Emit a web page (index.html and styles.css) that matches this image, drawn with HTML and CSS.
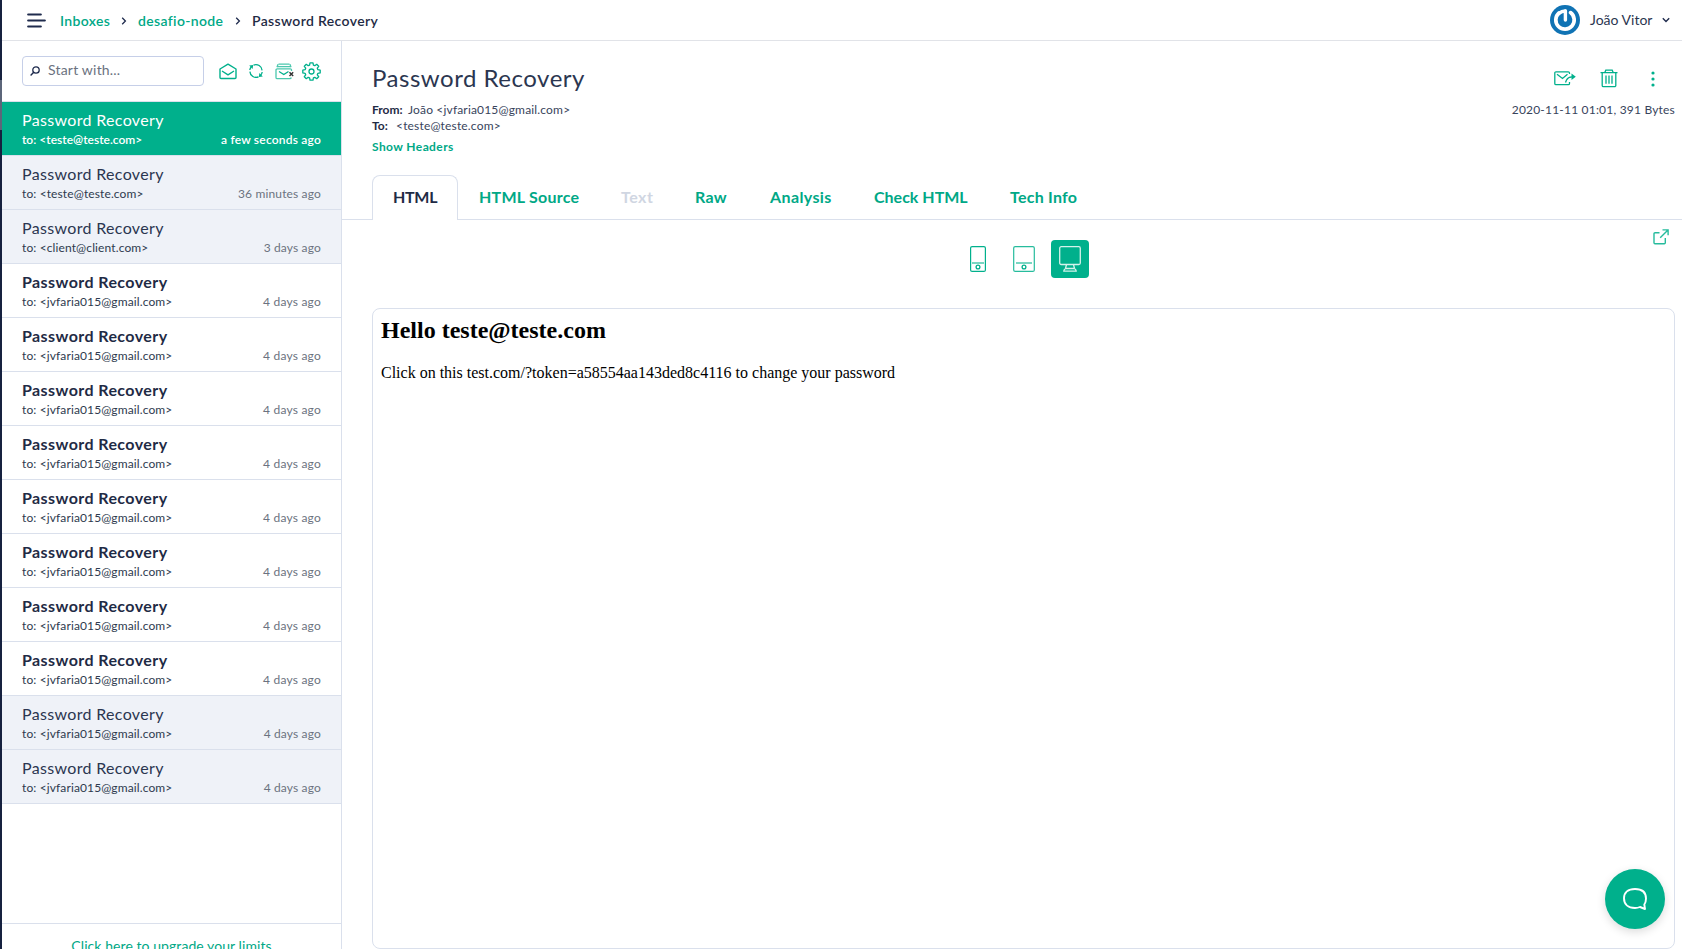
FILE: index.html
```html
<!DOCTYPE html>
<html lang="en">
<head>
<meta charset="utf-8">
<title>Password Recovery</title>
<link rel="stylesheet" href="styles.css">
</head>
<body>
<div class="app">
  <div class="rail"><div class="rail-thumb"></div></div>
  <div class="shell">
    <header class="topbar">
      <svg class="burger" width="19" height="15" viewBox="0 0 19 15"><path d="M1.2 1.5h12.6M1.2 7.5h16.6M1.2 13.5h12.6" stroke="#1f2b4d" stroke-width="2.2" stroke-linecap="round"/></svg>
      <nav class="crumbs">
        <a class="crumb crumb-inboxes">Inboxes</a>
        <svg class="chev" width="6" height="8" viewBox="0 0 6 8"><path d="M1.2 .8L4.4 4 1.2 7.2" fill="none" stroke="#1f2b4d" stroke-width="1.3"/></svg>
        <a class="crumb crumb-project">desafio-node</a>
        <svg class="chev" width="6" height="8" viewBox="0 0 6 8"><path d="M1.2 .8L4.4 4 1.2 7.2" fill="none" stroke="#1f2b4d" stroke-width="1.3"/></svg>
        <span class="crumb crumb-current">Password Recovery</span>
      </nav>
      <div class="user">
        <svg width="30" height="30" viewBox="0 0 30 30"><circle cx="15" cy="15" r="15" fill="#1073b4"/><path d="M9 8A9.200 9.200 0 1 0 20.500 7.600" fill="none" stroke="#fff" stroke-width="3.700" stroke-linecap="round"/><path d="M9.200 8.200Q11.500 6 15.300 6" fill="none" stroke="#fff" stroke-width="3.400" stroke-linecap="round"/><path d="M15.400 6v9" stroke="#fff" stroke-width="3.400" stroke-linecap="round"/></svg>
        <span class="user-name">João Vitor</span>
        <svg width="8" height="6" viewBox="0 0 8 6"><path d="M.8 1.200L4 4.400l3.200-3.200" fill="none" stroke="#1f2b4d" stroke-width="1.400"/></svg>
      </div>
    </header>
    <div class="body">
      <aside class="sidebar">
        <div class="tools">
          <div class="search">
            <svg width="10" height="10" viewBox="0 0 10 10"><circle cx="6" cy="4" r="3.200" fill="none" stroke="#1f2b4d" stroke-width="1.300"/><path d="M3.700 6.300L.6 9.400" stroke="#1f2b4d" stroke-width="1.400"/></svg>
            <span class="placeholder">Start with...</span>
          </div>
          <div class="tool-icons">
            <svg width="18" height="17" viewBox="0 0 18 17"><path d="M1 6L9 1.200 17 6V14.500a1 1 0 0 1-1 1H2a1 1 0 0 1-1-1zM3 8l6 3.800L15 8" fill="none" stroke="#00b08c" stroke-width="1.400" stroke-linejoin="round"/></svg>
            <svg width="16" height="16" viewBox="0 0 16 16"><path d="M5.500 2.100A6.200 6.200 0 0 1 14.100 7.400M10.500 13.900A6.200 6.200 0 0 1 1.900 8.600M1.800 7A6.200 6.200 0 0 1 3.200 4M14.200 9A6.200 6.200 0 0 1 12.800 12" fill="none" stroke="#00b08c" stroke-width="1.300"/><path d="M1.200 2.400l4-.4-.6 4zM14.800 13.600l-4 .4.600-4z" fill="#00b08c"/></svg>
            <svg width="20" height="17" viewBox="0 0 20 17"><g fill="none" stroke="#4cc8ae" stroke-width="1.300"><path d="M3.500 1.200h11M2.500 3.700h13M16.500 8V7a1.200 1.200 0 0 0-1.200-1.200H2.200A1.200 1.200 0 0 0 1 7v7.500a1.200 1.200 0 0 0 1.200 1.200h12.600a1.600 1.600 0 0 0 1.500-1.200M2 4.200l1-3M16 4.200l-1-3"/><path d="M4 8.500l4.800 3L13.500 8.500" stroke="#00b08c"/></g><path d="M14.500 9.200l3.700 3.700M18.200 9.200l-3.700 3.700" stroke="#333" stroke-width="1.400"/></svg>
            <svg class="gear" width="19" height="19" viewBox="0 0 19 19"><g fill="none" stroke="#00b08c" stroke-width="1.300" stroke-linejoin="round"><path d="M8 .8h3l.4 2.300 1.400.6 1.900-1.400 2 2-1.400 1.900.6 1.500 2.300.4v2.800l-2.300.4-.6 1.500 1.400 1.900-2 2-1.900-1.400-1.400.6-.4 2.300H8l-.4-2.300-1.400-.6-1.900 1.400-2-2 1.400-1.900-.6-1.500-2.300-.4V8.100l2.300-.4.600-1.500-1.400-1.900 2-2 1.900 1.400 1.400-.6z"/><circle cx="9.500" cy="9.500" r="2.500"/></g></svg>
          </div>
        </div>
        <ul class="mails">
          <li class="mail active"><div class="subject">Password Recovery</div><div class="meta"><span class="to">to: &lt;teste@teste.com&gt;</span><span class="time">a few seconds ago</span></div></li>
          <li class="mail read"><div class="subject">Password Recovery</div><div class="meta"><span class="to">to: &lt;teste@teste.com&gt;</span><span class="time">36 minutes ago</span></div></li>
          <li class="mail read"><div class="subject">Password Recovery</div><div class="meta"><span class="to">to: &lt;client@client.com&gt;</span><span class="time">3 days ago</span></div></li>
          <li class="mail"><div class="subject">Password Recovery</div><div class="meta"><span class="to">to: &lt;jvfaria015@gmail.com&gt;</span><span class="time">4 days ago</span></div></li>
          <li class="mail"><div class="subject">Password Recovery</div><div class="meta"><span class="to">to: &lt;jvfaria015@gmail.com&gt;</span><span class="time">4 days ago</span></div></li>
          <li class="mail"><div class="subject">Password Recovery</div><div class="meta"><span class="to">to: &lt;jvfaria015@gmail.com&gt;</span><span class="time">4 days ago</span></div></li>
          <li class="mail"><div class="subject">Password Recovery</div><div class="meta"><span class="to">to: &lt;jvfaria015@gmail.com&gt;</span><span class="time">4 days ago</span></div></li>
          <li class="mail"><div class="subject">Password Recovery</div><div class="meta"><span class="to">to: &lt;jvfaria015@gmail.com&gt;</span><span class="time">4 days ago</span></div></li>
          <li class="mail"><div class="subject">Password Recovery</div><div class="meta"><span class="to">to: &lt;jvfaria015@gmail.com&gt;</span><span class="time">4 days ago</span></div></li>
          <li class="mail"><div class="subject">Password Recovery</div><div class="meta"><span class="to">to: &lt;jvfaria015@gmail.com&gt;</span><span class="time">4 days ago</span></div></li>
          <li class="mail"><div class="subject">Password Recovery</div><div class="meta"><span class="to">to: &lt;jvfaria015@gmail.com&gt;</span><span class="time">4 days ago</span></div></li>
          <li class="mail read"><div class="subject">Password Recovery</div><div class="meta"><span class="to">to: &lt;jvfaria015@gmail.com&gt;</span><span class="time">4 days ago</span></div></li>
          <li class="mail read"><div class="subject">Password Recovery</div><div class="meta"><span class="to">to: &lt;jvfaria015@gmail.com&gt;</span><span class="time">4 days ago</span></div></li>
        </ul>
        <div class="upgrade"><a>Click here to upgrade your limits</a></div>
      </aside>
      <main class="message">
        <div class="head">
          <div class="head-left">
            <h1 class="title">Password Recovery</h1>
            <div class="addr"><b class="from-label">From:</b><span class="from-value">João &lt;jvfaria015@gmail.com&gt;</span></div>
            <div class="addr"><b class="to-label">To:</b><span class="to-value">&lt;teste@teste.com&gt;</span></div>
            <a class="show-headers">Show Headers</a>
          </div>
          <div class="head-right">
            <div class="actions">
              <svg width="22" height="15" viewBox="0 0 22 15"><g fill="none" stroke="#00b08c" stroke-width="1.300"><path d="M15.500 3V2A1.200 1.200 0 0 0 14.300.8H2A1.200 1.200 0 0 0 .8 2v10.500a1.200 1.200 0 0 0 1.200 1.200h12.300a1.200 1.200 0 0 0 1.200-1.200V11M3 3.200l5.500 4.300L13.500 3.200"/><path d="M11.500 11.500l1-2.500q1.500-3 5.500-3.200"/></g><path d="M17.500 2.600l4.300 3.200-4.300 3.200z" fill="#00b08c"/></svg>
              <svg class="trash" width="18" height="19" viewBox="0 0 18 19"><path d="M.5 3.700h17M4.800 3.500l1-2.300h6.400l1 2.300M2.200 4v12.500a1.200 1.200 0 0 0 1.200 1.200h11.200a1.200 1.200 0 0 0 1.200-1.200V4M6 6.500v8.200M9 6.500v8.200M12 6.500v8.200" fill="none" stroke="#00b08c" stroke-width="1.300"/></svg>
              <svg width="4" height="16" viewBox="0 0 4 16" fill="#00b08c"><circle cx="2" cy="2" r="1.600"/><circle cx="2" cy="8" r="1.600"/><circle cx="2" cy="14" r="1.600"/></svg>
            </div>
            <div class="stamp">2020-11-11 01:01, 391 Bytes</div>
          </div>
        </div>
        <div class="tabs">
          <div class="tab current">HTML</div>
          <div class="tab t-source">HTML Source</div>
          <div class="tab t-text">Text</div>
          <div class="tab t-raw">Raw</div>
          <div class="tab t-analysis">Analysis</div>
          <div class="tab t-check">Check HTML</div>
          <div class="tab t-tech">Tech Info</div>
        </div>
        <div class="devices">
          <div class="device"><svg width="16" height="26" viewBox="0 0 16 26"><g fill="none" stroke="#00b08c"><rect x=".6" y=".6" width="14.800" height="24.800" rx="1.500" stroke-width="1.200"/><path d="M2 17h12" stroke="#4cc8ae" stroke-width="1.500"/><circle cx="8" cy="21" r="1.900" stroke-width="1.300"/></g></svg></div>
          <div class="device"><svg width="22" height="26" viewBox="0 0 22 26"><g fill="none" stroke="#00b08c"><rect x=".7" y=".6" width="20.600" height="24.800" rx="1.500" stroke="#26bc9d" stroke-width="1.200"/><path d="M3 17h16" stroke="#4cc8ae" stroke-width="1.500"/><circle cx="11" cy="21" r="1.900" stroke-width="1.300"/></g></svg></div>
          <div class="device selected"><svg width="22" height="26" viewBox="0 0 22 26"><g fill="none" stroke="#d4f2eb" stroke-width="1.300"><rect x=".7" y=".7" width="20.600" height="17.800" rx="1.500"/><path d="M7.500 18.500l-1 4M14.500 18.500l1 4M6.500 22.500h9q1.700 1 1.700 2.600H4.800q0-1.600 1.700-2.600z"/></g></svg></div>
          <svg class="external" width="16" height="16" viewBox="0 0 16 16"><g fill="none" stroke="#26bc9d" stroke-width="1.400"><path d="M6.500 3.700H2A1 1 0 0 0 1 4.700v9a1 1 0 0 0 1 1h9.300a1 1 0 0 0 1-1V9"/><path d="M7.200 8.700L15 1M9.500.9H15.100V6.300"/></g></svg>
        </div>
        <article class="preview">
          <h2 class="hello">Hello teste@teste.com</h2>
          <p class="copy">Click on this test.com/?token=a58554aa143ded8c4116 to change your password</p>
        </article>
      </main>
    </div>
  </div>
  <div class="chat"><svg width="26" height="24" viewBox="0 0 26 24"><path d="M22.300 17.500C23.600 15.700 24 14 24 11.500 24 5.500 20 2 13 2S2 5.500 2 11.300 6 21 13 21q2.700 0 5-1l5 2z" fill="none" stroke="#fff" stroke-width="1.900" stroke-linejoin="round"/></svg></div>
</div>
</body>
</html>
```
FILE: styles.css
```css
* { box-sizing: border-box; }
body { margin: 0; font-family: Lato, "Open Sans", sans-serif; color: #1f2b45; background: #fff; overflow: hidden; }
svg { display: block; flex: none; }
.app { display: flex; height: 949px; overflow: hidden; }
.rail { width: 2px; background: #16213f; padding-top: 80px; flex: none; }
.rail-thumb { height: 50px; background: #5c667a; }
.shell { flex: 1; display: flex; flex-direction: column; min-width: 0; }

.topbar { height: 41px; flex: none; display: flex; align-items: center; border-bottom: 1px solid #e1e3e8; padding: 0 12px 0 25px; }
.crumbs { display: flex; align-items: center; margin-left: 14px; font-size: 14px; font-weight: 600; white-space: nowrap; }
.crumb { color: #00a886; line-height: 20px; padding-top: 1px; }
.crumb-inboxes { width: 50px; letter-spacing: .35px; }
.crumb-project { width: 86px; letter-spacing: .35px; }
.crumb-current { color: #1f2b45; letter-spacing: .35px; }
.chev { margin: 2px 11px 0 11px; }
.user { margin-left: auto; display: flex; align-items: center; }
.user-name { font-size: 14px; line-height: 20px; margin: 0 10px 1px 10px; width: 62px; letter-spacing: 0; white-space: nowrap; color: #2b3650; }

.body { flex: 1; display: flex; min-height: 0; }
.sidebar { width: 340px; border-right: 1px solid #dae0ec; display: flex; flex-direction: column; flex: none; }
.tools { height: 61px; flex: none; display: flex; align-items: center; padding: 0 16px 0 20px; border-bottom: 1px solid #dae0ec; }
.search { width: 182px; height: 30px; flex: none; border: 1px solid #c6cfe8; border-radius: 4px; display: flex; align-items: center; gap: 8px; padding-left: 7px; font-size: 14px; color: #6b7280; letter-spacing: .2px; }
.placeholder { line-height: 20px; margin-bottom: 2px; }
.tool-icons { display: flex; align-items: center; margin-left: 15px; gap: 11px; }
.gear { margin-left: -4px; }
.mails { list-style: none; margin: 0; padding: 0; flex: 1; }
.mail { height: 54px; border-bottom: 1px solid #dae0ec; padding: 7px 20px 0; white-space: nowrap; }
.subject { font-size: 16px; line-height: 22px; font-weight: 700; letter-spacing: .42px; }
.meta { display: flex; justify-content: space-between; font-size: 12px; line-height: 16px; margin-top: 1px; letter-spacing: .12px; color: #2e3a4e; }
.time { color: #6b7280; letter-spacing: .22px; }
.read { background: #eff2f8; }
.read .subject, .active .subject { font-weight: 400; letter-spacing: .33px; }
.read .subject { color: #2b3650; }
.read .time { letter-spacing: .15px; }
.active { background: #00b08c; color: #fff; }
.active .meta, .active .time { color: #fff; font-weight: 600; }
.active .meta { letter-spacing: .02px; }
.active .time { letter-spacing: .2px; }
.upgrade { height: 26px; border-top: 1px solid #dae0ec; padding-top: 12px; text-align: center; font-size: 14px; line-height: 20px; color: #00a886; overflow: hidden; white-space: nowrap; letter-spacing: .07px; }

.message { flex: 1; display: flex; flex-direction: column; min-width: 0; }
.head { height: 134px; flex: none; display: flex; justify-content: space-between; padding: 20px 7px 0 30px; white-space: nowrap; }
.title { margin: 0 0 7px; font-size: 24px; line-height: 34px; font-weight: 400; letter-spacing: .52px; color: #2b3650; }
.addr { font-size: 12px; line-height: 16px; display: flex; color: #38445c; letter-spacing: .17px; }
.addr b { color: #1f2b45; letter-spacing: 0; }
.from-label { width: 36px; }
.to-label { width: 24px; }
.show-headers { display: block; font-size: 12px; line-height: 16px; font-weight: 700; color: #00a886; margin-top: 5px; letter-spacing: .4px; }
.head-right { display: flex; flex-direction: column; align-items: flex-end; }
.actions { display: flex; align-items: center; height: 34px; gap: 24px; padding: 1px 20px 0 0; }
.trash { margin-right: 9px; }
.stamp { font-size: 12px; line-height: 16px; margin-top: 7px; color: #38445c; letter-spacing: .2px; }
.tabs { height: 45px; flex: none; display: flex; border-bottom: 1px solid #dae0ec; padding-left: 30px; font-size: 16px; line-height: 43px; font-weight: 700; color: #00a886; white-space: nowrap; letter-spacing: .25px; }
.current { width: 86px; height: 45px; line-height: 41px; border: 1px solid #dae0ec; border-bottom: 0; border-radius: 8px 8px 0 0; background: #fff; color: #1f2b45; padding-left: 20px; margin-right: 21px; letter-spacing: -.3px; }
.t-source { width: 142px; }
.t-text { width: 74px; color: #d0d6e2; letter-spacing: .5px; }
.t-raw { width: 75px; }
.t-analysis { width: 104px; letter-spacing: .38px; }
.t-check { width: 136px; letter-spacing: 0; }
.t-tech { letter-spacing: .25px; }
.devices { position: relative; height: 88px; flex: none; display: flex; justify-content: center; gap: 8px; padding: 20px 0 0 23px; }
.device { width: 38px; height: 38px; display: flex; align-items: center; justify-content: center; border-radius: 4px; }
.selected { background: #00b08c; }
.external { position: absolute; right: 13px; top: 9px; }
.preview { flex: 1; margin: 0 7px 0 30px; border: 1px solid #dae0ec; border-radius: 8px; padding: 8px; font-family: "Liberation Serif", serif; color: #000; }
.hello { margin: 0; font-size: 24px; line-height: 27px; font-weight: 700; }
.copy { margin: 20px 0 0; font-size: 16px; line-height: 18px; }
.chat { position: absolute; left: 1605px; top: 869px; width: 60px; height: 60px; border-radius: 50%; background: #00b08c; box-shadow: 0 3px 10px rgba(0,0,0,.14); display: flex; align-items: center; justify-content: center; }
```
